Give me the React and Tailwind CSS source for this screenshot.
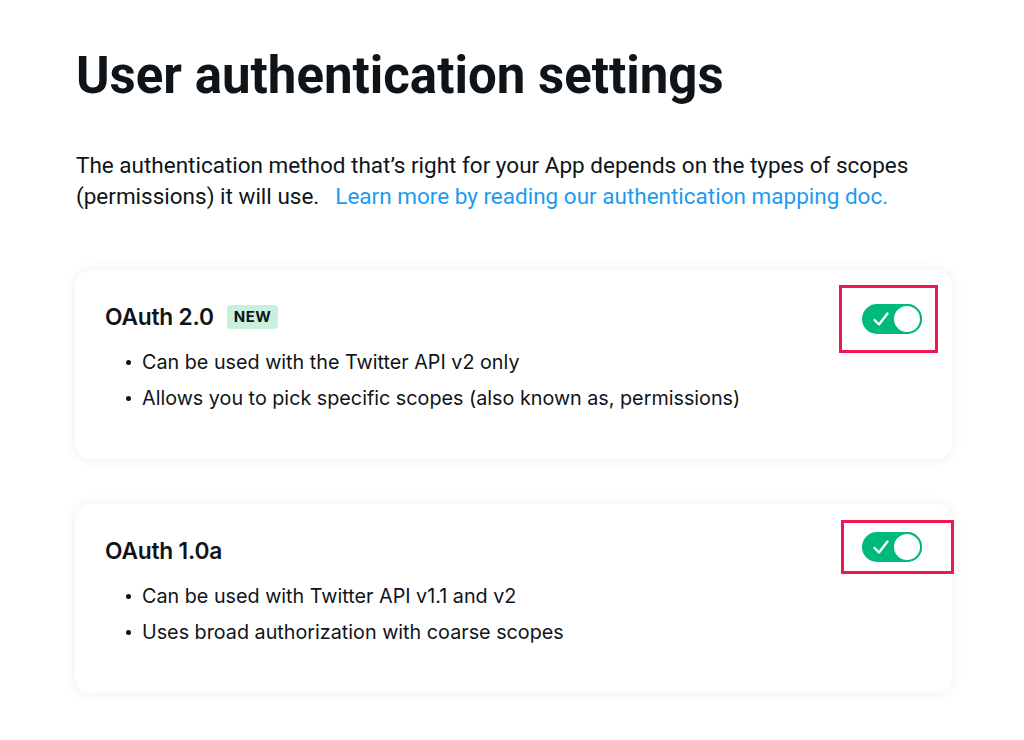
import React from "react";

function Toggle() {
  return (
    <div className="relative w-[60px] h-[30px] rounded-full bg-[#00ba7c]">
      <svg className="absolute left-[10px] top-[7px]" width="18" height="16" viewBox="0 0 18 16" fill="none">
        <path d="M2.5 9 L7 13.5 L15.5 2.5" stroke="white" strokeWidth="2.3" strokeLinecap="round" strokeLinejoin="round" />
      </svg>
      <div className="absolute right-0 top-0 w-[30px] h-[30px] rounded-full bg-white border-2 border-[#00ba7c]" />
    </div>
  );
}

function Card({ title, badge, bullets, boxClass }) {
  return (
    <div className="relative bg-white rounded-[16px] shadow-[0_0_14px_rgba(15,20,25,0.07)] pl-[30px] pr-[30px] pt-[32px] pb-[49px]">
      <div className="flex items-center gap-[13px] h-[30px]">
        <span className="text-[22.75px] font-semibold text-[#0f1419] tracking-[-0.2px]">{title}</span>
        {badge && (
          <span className="bg-[#c7f0dd] text-[#0f1419] text-[15px] font-bold px-[7px] h-[24px] flex items-center rounded-[4px] tracking-[0.5px]">
            {badge}
          </span>
        )}
      </div>
      <ul className="mt-[18px] flex flex-col gap-[12px]">
        {bullets.map((b) => (
          <li key={b} className="flex items-center text-[19.75px] text-[#0f1419] leading-[24px]">
            <span className="w-[5px] h-[5px] rounded-full bg-[#0f1419] ml-[21px] mr-[11px]" />
            {b}
          </li>
        ))}
      </ul>
      <div className={"absolute border-[3px] border-[#f2174f] flex items-center " + boxClass}>
        <Toggle />
      </div>
    </div>
  );
}

export default function App() {
  return (
    <div className="w-[1024px] h-[740px] bg-white pl-[76px] pr-[40px] pt-[48px]" style={{ fontFamily: "Inter, 'Noto Sans', sans-serif" }}>
      <h1 className="text-[51px] font-bold text-[#0f1419] leading-[56px]" style={{ fontFamily: "Roboto, sans-serif" }}>
        User authentication settings
      </h1>
      <p className="mt-[46px] text-[22.5px] leading-[31px] text-[#0f1419] whitespace-nowrap" style={{ fontFamily: "Roboto, sans-serif" }}>
        The authentication method that’s right for your App depends on the types of scopes
        <br />
        (permissions) it will use.
        <span className="ml-[16px] text-[#1d9bf0]">Learn more by reading our authentication mapping doc.</span>
      </p>
      <div className="mt-[58px] flex flex-col gap-[45px] w-[877px] -ml-[1px]">
        <Card
          title="OAuth 2.0"
          badge="NEW"
          bullets={["Can be used with the Twitter API v2 only", "Allows you to pick specific scopes (also known as, permissions)"]}
          boxClass="left-[764px] top-[15px] w-[99px] h-[68px] pl-[20px]"
        />
        <Card
          title="OAuth 1.0a"
          bullets={["Can be used with Twitter API v1.1 and v2", "Uses broad authorization with coarse scopes"]}
          boxClass="left-[766px] top-[16px] w-[113px] h-[54px] pl-[18px]"
        />
      </div>
    </div>
  );
}
